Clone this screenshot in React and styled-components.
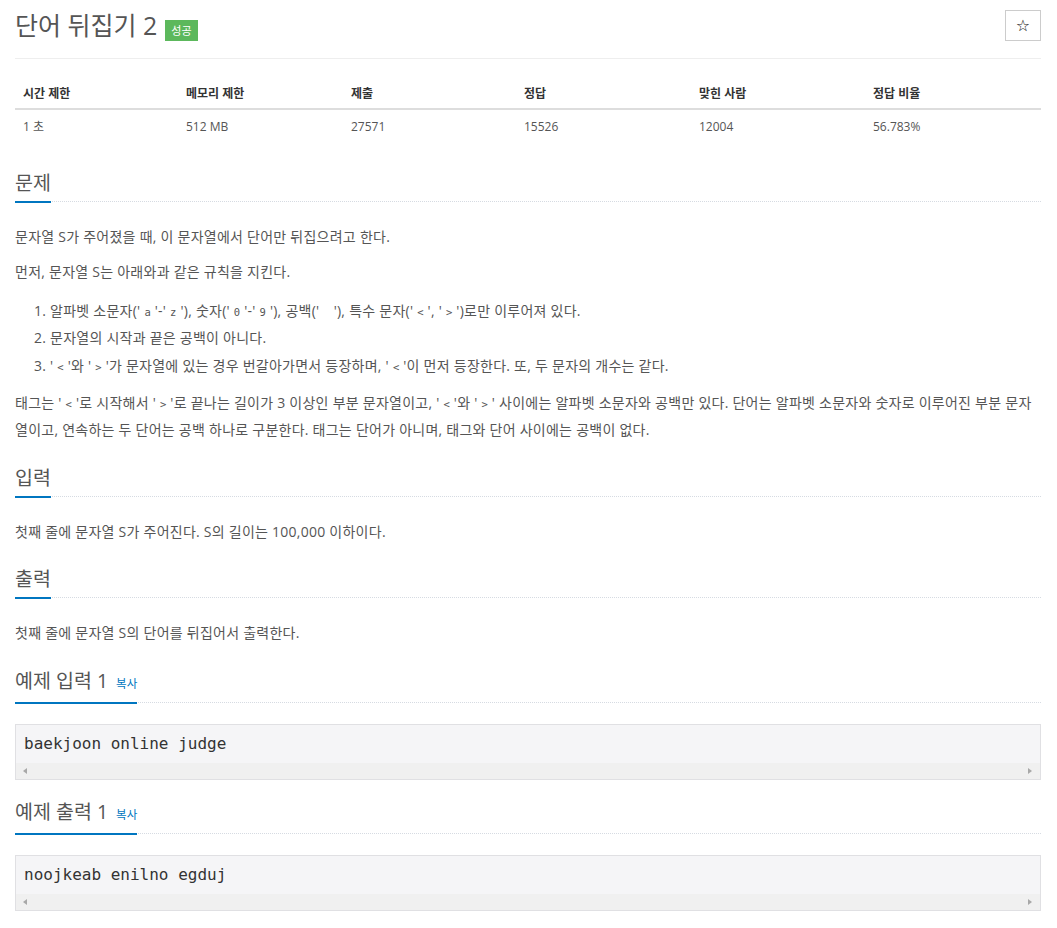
import styled, { createGlobalStyle } from "styled-components";

const GlobalStyle = createGlobalStyle`
  body {
    margin: 0;
    background: #fff;
    color: #555;
    font-family: "Open Sans", "Noto Sans CJK KR", sans-serif;
    font-size: 14px;
  }
`;

const Page = styled.div`
  width: 1026px;
  padding: 0 15px;
`;

const Header = styled.div`
  display: flex;
  align-items: center;
  justify-content: space-between;
  padding: 8px 0 15px;
  border-bottom: 1px solid #eee;
`;

const Title = styled.h1`
  display: flex;
  align-items: center;
  margin: 0;
  font-size: 25px;
  line-height: 35px;
  font-weight: 400;
  color: #555;
`;

const Badge = styled.span`
  margin: 10px 0 0 8px;
  padding: 0 6px;
  height: 21px;
  line-height: 21px;
  background: #5cb85c;
  color: #fff;
  font-size: 11px;
`;

const StarButton = styled.button`
  width: 36px;
  height: 31px;
  padding: 0;
  background: #fff;
  border: 1px solid #ccc;
  color: #111;
  font-family: "DejaVu Sans", sans-serif;
  font-size: 16px;
  line-height: 1;
`;

const Table = styled.table`
  width: 100%;
  margin: 16px 0 29px;
  border-collapse: collapse;
  font-size: 12px;
  line-height: 17px;
`;

const Th = styled.th`
  text-align: left;
  padding: 10px 8px 6px;
  color: #333;
  font-weight: 700;
  border-bottom: 2px solid #ddd;
`;

const Td = styled.td`
  padding: 8px;
  color: #555;
`;

const Headline = styled.div`
  margin: ${(p) => p.$top || 23}px 0 21px;
  border-bottom: 1px dotted #d6dbe2;
`;

const H2 = styled.h2`
  display: inline-block;
  margin: 0 0 -2px;
  padding-bottom: 7px;
  border-bottom: 2px solid #0076c0;
  font-size: 19.5px;
  line-height: 22px;
  font-weight: 400;
  color: #555;
`;

const CopyLink = styled.span`
  margin-left: 8px;
  font-size: 11.5px;
  color: #0076c0;
`;

const Text = styled.div`
  line-height: 27.5px;
  letter-spacing: 0.25px;
  word-break: break-all;

  p {
    margin: 0 0 7.5px;
  }
`;

const List = styled.ol`
  margin: 11px 0 9.5px;
  padding-left: 35px;
`;

const Code = styled.code`
  margin: 0 4px;
  font-family: "DejaVu Sans Mono", monospace;
  font-size: 10.5px;
  line-height: 1;
  letter-spacing: 0;
  color: #555;
`;

const SampleBox = styled.div`
  border: 1px solid #e0e0e3;
  background: #f5f5f7;
`;

const SamplePre = styled.pre`
  margin: 0;
  padding: 9px 8px;
  font-family: "DejaVu Sans Mono", monospace;
  font-size: 16px;
  line-height: 20px;
  color: #333;
`;

const ScrollTrack = styled.div`
  display: flex;
  align-items: center;
  justify-content: space-between;
  height: 16px;
  padding: 0 8px 0 7px;
  background: #f0f0f0;
`;

const Arrow = styled.span`
  width: 0;
  height: 0;
  border-top: 3.5px solid transparent;
  border-bottom: 3.5px solid transparent;
  ${(p) =>
    p.$dir === "left"
      ? "border-right: 4px solid #a8a8a8;"
      : "border-left: 4px solid #a8a8a8;"}
`;

const stats = [
  ["시간 제한", "1 초", 163],
  ["메모리 제한", "512 MB", 165],
  ["제출", "27571", 173],
  ["정답", "15526", 175],
  ["맞힌 사람", "12004", 174],
  ["정답 비율", "56.783%", 176],
];

function Section({ title, top, copy, children }) {
  return (
    <>
      <Headline $top={top}>
        <H2>
          {title}
          {copy && <CopyLink>복사</CopyLink>}
        </H2>
      </Headline>
      {children}
    </>
  );
}

function Sample({ text }) {
  return (
    <SampleBox>
      <SamplePre>{text}</SamplePre>
      <ScrollTrack>
        <Arrow $dir="left" />
        <Arrow $dir="right" />
      </ScrollTrack>
    </SampleBox>
  );
}

export default function App() {
  return (
    <Page>
      <GlobalStyle />
      <Header>
        <Title>
          단어 뒤집기 2<Badge>성공</Badge>
        </Title>
        <StarButton>☆</StarButton>
      </Header>

      <Table>
        <colgroup>
          {stats.map(([label, , w]) => (
            <col key={label} style={{ width: w }} />
          ))}
        </colgroup>
        <thead>
          <tr>
            {stats.map(([label]) => (
              <Th key={label}>{label}</Th>
            ))}
          </tr>
        </thead>
        <tbody>
          <tr>
            {stats.map(([label, value]) => (
              <Td key={label}>{value}</Td>
            ))}
          </tr>
        </tbody>
      </Table>

      <Section title="문제" top={29}>
        <Text>
          <p>문자열 S가 주어졌을 때, 이 문자열에서 단어만 뒤집으려고 한다.</p>
          <p>먼저, 문자열 S는 아래와과 같은 규칙을 지킨다.</p>
          <List>
            <li>
              알파벳 소문자('<Code>a</Code>'-'<Code>z</Code>'), 숫자('
              <Code>0</Code>'-'<Code>9</Code>'), 공백('<Code> </Code>'), 특수
              문자('<Code>&lt;</Code>', '<Code>&gt;</Code>')로만 이루어져 있다.
            </li>
            <li>문자열의 시작과 끝은 공백이 아니다.</li>
            <li>
              '<Code>&lt;</Code>'와 '<Code>&gt;</Code>'가 문자열에 있는 경우
              번갈아가면서 등장하며, '<Code>&lt;</Code>'이 먼저 등장한다. 또, 두
              문자의 개수는 같다.
            </li>
          </List>
          <p>
            태그는 '<Code>&lt;</Code>'로 시작해서 '<Code>&gt;</Code>'로 끝나는
            길이가 3 이상인 부분 문자열이고, '<Code>&lt;</Code>'와 '
            <Code>&gt;</Code>' 사이에는 알파벳 소문자와 공백만 있다. 단어는
            알파벳 소문자와 숫자로 이루어진 부분 문자열이고, 연속하는 두 단어는
            공백 하나로 구분한다. 태그는 단어가 아니며, 태그와 단어 사이에는
            공백이 없다.
          </p>
        </Text>
      </Section>

      <Section title="입력">
        <Text>
          <p>첫째 줄에 문자열 S가 주어진다. S의 길이는 100,000 이하이다.</p>
        </Text>
      </Section>

      <Section title="출력">
        <Text>
          <p>첫째 줄에 문자열 S의 단어를 뒤집어서 출력한다.</p>
        </Text>
      </Section>

      <Section title="예제 입력 1" top={23} copy>
        <Sample text="baekjoon online judge" />
      </Section>

      <Section title="예제 출력 1" top={21} copy>
        <Sample text="noojkeab enilno egduj" />
      </Section>
    </Page>
  );
}
